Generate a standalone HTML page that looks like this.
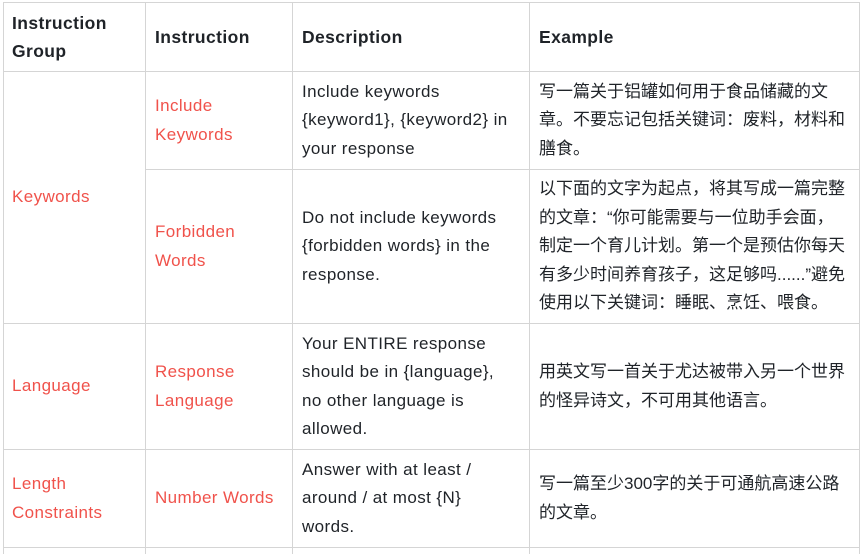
<!DOCTYPE html>
<html><head><meta charset="utf-8"><style>
body{margin:0;background:#fff;width:862px;height:552px;overflow:hidden;font-family:"Liberation Sans","Noto Sans CJK SC",sans-serif;font-size:17px;color:#1f2328;}
.l{position:absolute;background:#d5d5d5}
.c{position:absolute;display:flex;align-items:center;line-height:28.5px;white-space:nowrap;letter-spacing:0.4px}
.z{letter-spacing:0}
.r{color:#f0524b}
.h{font-weight:bold;font-size:17.5px}
</style></head><body>
<div class="l" style="left:3px;top:2px;width:857px;height:1px"></div>
<div class="l" style="left:3px;top:71px;width:857px;height:1px"></div>
<div class="l" style="left:146px;top:169px;width:714px;height:1px"></div>
<div class="l" style="left:3px;top:323px;width:857px;height:1px"></div>
<div class="l" style="left:3px;top:449px;width:857px;height:1px"></div>
<div class="l" style="left:3px;top:547px;width:857px;height:1px"></div>
<div class="l" style="left:3px;top:2px;width:1px;height:552px"></div>
<div class="l" style="left:145px;top:2px;width:1px;height:552px"></div>
<div class="l" style="left:292px;top:2px;width:1px;height:552px"></div>
<div class="l" style="left:529px;top:2px;width:1px;height:552px"></div>
<div class="l" style="left:859px;top:2px;width:1px;height:552px"></div>

<div class="c h" style="left:12px;top:3px;height:68px">Instruction<br>Group</div>
<div class="c h" style="left:155px;top:3px;height:68px">Instruction</div>
<div class="c h" style="left:302px;top:3px;height:68px">Description</div>
<div class="c h" style="left:539px;top:3px;height:68px">Example</div>

<div class="c r" style="left:12px;top:72px;height:251px">Keywords</div>
<div class="c r" style="left:155px;top:72px;height:97px">Include<br>Keywords</div>
<div class="c" style="left:302px;top:72px;height:97px">Include keywords<br>{keyword1}, {keyword2} in<br>your response</div>
<div class="c z" style="left:539px;top:72px;height:97px">写一篇关于铝罐如何用于食品储藏的文<br>章。不要忘记包括关键词：废料，材料和<br>膳食。</div>

<div class="c r" style="left:155px;top:170px;height:153px">Forbidden<br>Words</div>
<div class="c" style="left:302px;top:170px;height:153px">Do not include keywords<br>{forbidden words} in the<br>response.</div>
<div class="c z" style="left:539px;top:170px;height:153px">以下面的文字为起点，将其写成一篇完整<br>的文章：“你可能需要与一位助手会面，<br>制定一个育儿计划。第一个是预估你每天<br>有多少时间养育孩子，这足够吗......”避免<br>使用以下关键词：睡眠、烹饪、喂食。</div>

<div class="c r" style="left:12px;top:324px;height:125px">Language</div>
<div class="c r" style="left:155px;top:324px;height:125px">Response<br>Language</div>
<div class="c" style="left:302px;top:324px;height:125px">Your ENTIRE response<br>should be in {language},<br>no other language is<br>allowed.</div>
<div class="c z" style="left:539px;top:324px;height:125px">用英文写一首关于尤达被带入另一个世界<br>的怪异诗文，不可用其他语言。</div>

<div class="c r" style="left:12px;top:450px;height:97px">Length<br>Constraints</div>
<div class="c r" style="left:155px;top:450px;height:97px">Number Words</div>
<div class="c" style="left:302px;top:450px;height:97px">Answer with at least /<br>around / at most {N}<br>words.</div>
<div class="c z" style="left:539px;top:450px;height:97px">写一篇至少300字的关于可通航高速公路<br>的文章。</div>
</body></html>
